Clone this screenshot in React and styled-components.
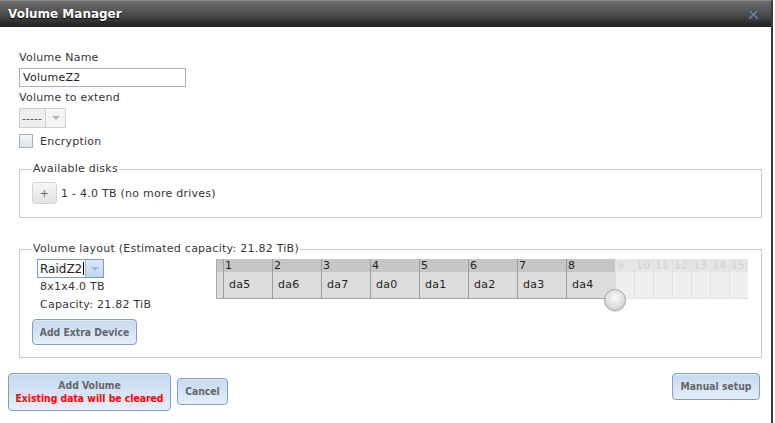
import React from "react";
import styled, { createGlobalStyle } from "styled-components";

const GlobalStyle = createGlobalStyle`
  html, body {
    margin: 0;
    padding: 0;
    background: #ffffff;
  }
  body {
    font-family: "DejaVu Sans", Verdana, sans-serif;
    font-size: 11px;
    letter-spacing: 0.25px;
    color: #363636;
  }
`;

const Dialog = styled.div`
  width: 771px;
  height: 422px;
  background: #fff;
  border-top: 1px solid #8a8a8a;
  border-right: 2px solid #3c3c3c;
  overflow: hidden;
`;

const TitleBar = styled.div`
  height: 26px;
  display: flex;
  align-items: center;
  justify-content: space-between;
  padding: 0 12px 0 8px;
  background: linear-gradient(#6e6e6e, #4a4a4a 55%, #2b2b2b 85%, #222);
  color: #fff;
  font-weight: bold;
  font-size: 12px;
  letter-spacing: 0;
  text-shadow: 0 1px 1px #000;
`;

const Content = styled.div`
  display: flex;
  flex-direction: column;
  align-items: flex-start;
  padding: 24px 11px 0 19px;
`;

const Label = styled.div`
  line-height: 14px;
  margin-top: ${(p) => p.$mt || 0}px;
`;

const TextInput = styled.input`
  box-sizing: border-box;
  width: 167px;
  height: 19px;
  margin: 3px 0 0;
  padding: 0 3px;
  border: 1px solid #aab2bf;
  font-family: inherit;
  font-size: 11px;
  letter-spacing: 0.25px;
  color: #222;
  outline: none;
`;

const Select = styled.div`
  box-sizing: border-box;
  display: flex;
  margin-top: ${(p) => p.$mt || 0}px;
  margin-left: ${(p) => p.$ml || 0}px;
  width: ${(p) => p.$w}px;
  height: ${(p) => p.$h}px;
  border: 1px solid ${(p) => (p.$active ? "#7c9ccb" : "#cfcfcf")};
  background: ${(p) => (p.$active ? "#fff" : "#eeeeee")};
`;

const SelectText = styled.div`
  flex: 1;
  display: flex;
  align-items: center;
  padding-left: 2px;
  font-size: ${(p) => (p.$big ? 12 : 11)}px;
  letter-spacing: 0;
  color: ${(p) => (p.$muted ? "#555" : "#222")};
`;

const Caret = styled.div`
  width: ${(p) => p.$w}px;
  border-left: 1px solid ${(p) => (p.$active ? "#9fbbe0" : "#cfcfcf")};
  background: ${(p) => (p.$active ? "linear-gradient(#dbe8f8, #c2d6f0)" : "#f4f4f4")};
  display: flex;
  align-items: center;
  justify-content: center;
  &::after {
    content: "";
    border-left: 4px solid transparent;
    border-right: 4px solid transparent;
    border-top: 4px solid ${(p) => (p.$active ? "#a4b8d2" : "#b5b5b5")};
  }
`;

const CursorBar = styled.span`
  display: inline-block;
  width: 1px;
  height: 13px;
  background: #000;
  margin-left: 1px;
`;

const CheckRow = styled.div`
  display: flex;
  align-items: center;
  gap: 7px;
  margin-top: 6px;
`;

const Checkbox = styled.div`
  box-sizing: border-box;
  width: 14px;
  height: 14px;
  border: 1px solid #a7afbc;
  background: linear-gradient(#f2f5f9, #dfe6ef);
`;

const Fieldset = styled.fieldset`
  box-sizing: border-box;
  width: 743px;
  margin: ${(p) => p.$mt}px 0 0;
  padding: ${(p) => p.$pt}px 12px ${(p) => p.$pb}px 12px;
  border: 1px solid #c8c8c8;
  min-width: 0;
`;

const Legend = styled.legend`
  padding: 0 1px;
  line-height: 14px;
  color: #363636;
`;

const DiskRow = styled.div`
  display: flex;
  align-items: center;
  gap: 4px;
`;

const SmallButton = styled.div`
  box-sizing: border-box;
  width: 25px;
  height: 22px;
  border: 1px solid #d2d2d2;
  border-radius: 3px;
  background: linear-gradient(#f6f6f6, #e4e4e4);
  display: flex;
  align-items: center;
  justify-content: center;
  color: #666;
  font-size: 11px;
`;

const LayoutRow = styled.div`
  display: flex;
  align-items: flex-start;
`;

const LayoutSide = styled.div`
  width: 184px;
  display: flex;
  flex-direction: column;
  align-items: flex-start;
`;

const InfoLine = styled.div`
  line-height: 14px;
  margin: ${(p) => p.$mt}px 0 0 8px;
`;

const Button = styled.div`
  box-sizing: border-box;
  display: flex;
  flex-direction: column;
  align-items: center;
  justify-content: center;
  width: ${(p) => p.$w}px;
  height: ${(p) => p.$h}px;
  margin-top: ${(p) => p.$mt || 0}px;
  margin-left: ${(p) => p.$ml || 0}px;
  border: 1px solid #7fa0c4;
  border-radius: 4px;
  background: linear-gradient(#c4d9f1, #e6effa);
  box-shadow: inset 0 1px 0 rgba(255, 255, 255, 0.5);
  color: #666;
  font-family: "DejaVu Sans Condensed", "DejaVu Sans", sans-serif;
  font-weight: bold;
  font-size: 10.3px;
  letter-spacing: 0;
  line-height: 13px;
  white-space: nowrap;
`;

const Warning = styled.span`
  color: #ff0000;
`;

const Grid = styled.div`
  position: relative;
  display: flex;
  border-left: 1px solid #aaa;
`;

const Column = styled.div`
  box-sizing: border-box;
  width: ${(p) => p.$w}px;
  display: flex;
  flex-direction: column;
  border-left: 1px solid ${(p) => (p.$used ? "#9c9c9c" : "#e0e0e0")};
  &:first-child {
    border-left: none;
  }
`;

const HeadCell = styled.div`
  height: 13px;
  line-height: 13px;
  padding-left: 1px;
  background: ${(p) => (p.$used ? "#c6c6c6" : "#e6e6e6")};
  color: ${(p) => (p.$used ? "#222" : "#d2d2d2")};
  font-size: 11px;
  letter-spacing: 0;
`;

const DataCell = styled.div`
  box-sizing: border-box;
  height: 27px;
  line-height: 26px;
  padding-left: 5px;
  background: ${(p) => (p.$used ? "#dcdcdc" : "#efefef")};
  border-bottom: 1px solid ${(p) => (p.$used ? "#a8a8a8" : "#e0e0e0")};
  color: #222;
`;

const Knob = styled.div`
  position: absolute;
  left: 387px;
  top: 30px;
  width: 20px;
  height: 20px;
  border-radius: 50%;
  border: 1px solid #a9a9a9;
  background: radial-gradient(circle at 50% 40%, #fbfbfb, #dcdcdc 60%, #c4c4c4);
  box-shadow: 0 1px 1px rgba(0, 0, 0, 0.15);
`;

const ButtonRow = styled.div`
  align-self: stretch;
  display: flex;
  align-items: flex-start;
  margin: 15px 0 0 -11px;
`;

const Spacer = styled.div`
  flex: 1;
`;

const CloseIcon = () => (
  <svg width="11" height="11" viewBox="0 0 11 11">
    <path d="M2 2 L9 9 M9 2 L2 9" stroke="#3a4a5b" strokeWidth="3.4" strokeLinecap="square" />
    <path d="M2 2 L9 9 M9 2 L2 9" stroke="#6c8096" strokeWidth="1.6" strokeLinecap="square" />
  </svg>
);

const disks = ["da5", "da6", "da7", "da0", "da1", "da2", "da3", "da4"];
const spare = [9, 10, 11, 12, 13, 14, 15];

export default function App() {
  return (
    <>
      <GlobalStyle />
      <Dialog>
        <TitleBar>
          <span>Volume Manager</span>
          <CloseIcon />
        </TitleBar>
        <Content>
          <Label>Volume Name</Label>
          <TextInput defaultValue="VolumeZ2" />
          <Label $mt={4}>Volume to extend</Label>
          <Select $mt={3} $w={47} $h={20}>
            <SelectText $muted>-----</SelectText>
            <Caret $w={19} />
          </Select>
          <CheckRow>
            <Checkbox />
            <span>Encryption</span>
          </CheckRow>

          <Fieldset $mt={14} $pt={6} $pb={13}>
            <Legend>Available disks</Legend>
            <DiskRow>
              <SmallButton>+</SmallButton>
              <span>1 - 4.0 TB (no more drives)</span>
            </DiskRow>
          </Fieldset>

          <Fieldset $mt={24} $pt={3} $pb={12}>
            <Legend>Volume layout (Estimated capacity: 21.82 TiB)</Legend>
            <LayoutRow>
              <LayoutSide>
                <Select $active $ml={5} $w={67} $h={19}>
                  <SelectText $big>
                    RaidZ2<CursorBar />
                  </SelectText>
                  <Caret $active $w={17} />
                </Select>
                <InfoLine $mt={2}>8x1x4.0 TB</InfoLine>
                <InfoLine $mt={4}>Capacity: 21.82 TiB</InfoLine>
                <Button $w={105} $h={26} $mt={7}>
                  Add Extra Device
                </Button>
              </LayoutSide>
              <Grid>
                <Column $w={6} $used>
                  <HeadCell $used />
                  <DataCell $used />
                </Column>
                {disks.map((d, i) => (
                  <Column key={d} $w={49} $used>
                    <HeadCell $used>{i + 1}</HeadCell>
                    <DataCell $used>{d}</DataCell>
                  </Column>
                ))}
                {spare.map((n) => (
                  <Column key={n} $w={19}>
                    <HeadCell>{n}</HeadCell>
                    <DataCell />
                  </Column>
                ))}
                <Knob />
              </Grid>
            </LayoutRow>
          </Fieldset>

          <ButtonRow>
            <Button $w={163} $h={38}>
              <span>Add Volume</span>
              <Warning>Existing data will be cleared</Warning>
            </Button>
            <Button $w={51} $h={27} $mt={5} $ml={6}>
              Cancel
            </Button>
            <Spacer />
            <Button $w={88} $h={27}>
              Manual setup
            </Button>
          </ButtonRow>
        </Content>
      </Dialog>
    </>
  );
}
